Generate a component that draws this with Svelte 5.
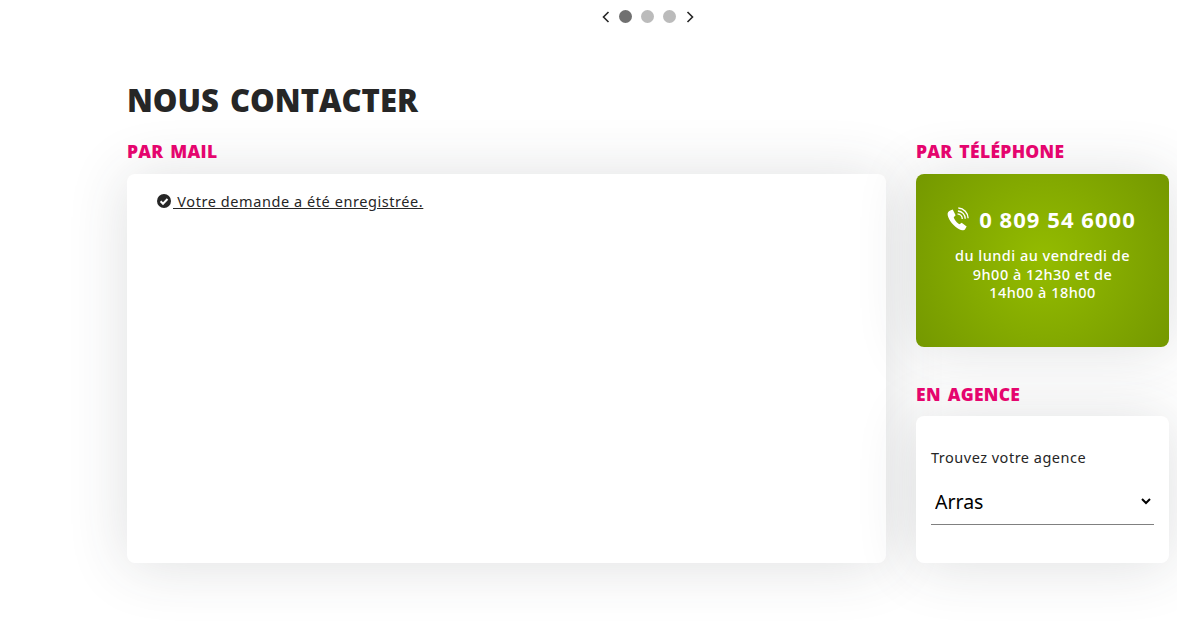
<script>
  const dots = [true, false, false];
</script>

<div class="page">
  <nav class="pager">
    <svg class="arrow" viewBox="0 0 8 12" width="8" height="12"><path d="M6.5 1 L1.5 6 L6.5 11" /></svg>
    {#each dots as on}
      <span class="dot" class:on></span>
    {/each}
    <svg class="arrow next" viewBox="0 0 8 12" width="8" height="12"><path d="M1.5 1 L6.5 6 L1.5 11" /></svg>
  </nav>

  <h1>NOUS CONTACTER</h1>

  <div class="columns">
    <section class="left">
      <h2>PAR MAIL</h2>
      <div class="card mail">
        <a href="#top" class="notice">
          <svg viewBox="0 0 14 14" width="14" height="14">
            <circle cx="7" cy="7" r="7" fill="#262626" />
            <path d="M3.6 7.3 L6 9.7 L10.5 5" fill="none" stroke="#fff" stroke-width="2" />
          </svg>
          <span>&#160;Votre demande a été enregistrée.</span>
        </a>
      </div>
    </section>

    <aside class="right">
      <h2>PAR TÉLÉPHONE</h2>
      <div class="card phone">
        <div class="number">
          <svg viewBox="0 0 24 24" width="25" height="25" fill="none">
            <path fill="#fff" d="M5 3.4 L7.4 2.4 L10.2 8 L8.4 9.8 C9 12 11.6 15.4 14 16.6 L16 15 L20.8 18.6 L19.4 21 C18.4 22.8 16 22.8 13.6 21.4 C8.4 18.4 3.4 12.4 2.6 7.8 C2.2 5.6 3.2 4.2 5 3.4 Z" />
            <path stroke="#fff" stroke-width="1.3" d="M12 6.6 C14.6 6.8 16.6 9 16.6 11.6 M12.4 3.8 C16.4 4 19.4 7.4 19.4 11.2 M12.8 1 C18 1.2 22.2 5.6 22.2 10.8" />
          </svg>
          <span>0 809 54 6000</span>
        </div>
        <p>du lundi au vendredi de<br />9h00 à 12h30 et de<br />14h00 à 18h00</p>
      </div>

      <h2 class="agency">EN AGENCE</h2>
      <div class="card agence">
        <label for="agence">Trouvez votre agence</label>
        <select id="agence">
          <option>Arras</option>
        </select>
      </div>
    </aside>
  </div>
</div>

<style>
  :global(body) {
    margin: 0;
    background: #fff;
    overflow: hidden;
  }
  .page {
    height: 635px;
    box-sizing: border-box;
    padding: 0 8px 0 127px;
    font-family: "Noto Sans", "Open Sans", sans-serif;
    color: #262626;
  }
  .pager {
    display: flex;
    align-items: center;
    justify-content: center;
    gap: 9px;
    height: 33px;
    width: 1041px;
  }
  .arrow.next {
    margin-left: 1px;
  }
  .arrow path {
    fill: none;
    stroke: #262626;
    stroke-width: 1.6;
  }
  .dot {
    width: 13px;
    height: 13px;
    border-radius: 50%;
    background: #bbb;
  }
  .dot.on {
    background: #707070;
  }
  h1 {
    margin: 47px 0 0;
    height: 40px;
    font-family: "Open Sans", "Noto Sans", sans-serif;
    font-size: 31px;
    line-height: 40px;
    font-weight: 800;
    letter-spacing: 0;
    word-spacing: 3px;
  }
  h2 {
    margin: 0;
    height: 23px;
    font-family: "Open Sans", "Noto Sans", sans-serif;
    font-size: 17.5px;
    line-height: 23px;
    font-weight: 800;
    color: #e5056e;
    letter-spacing: 0.3px;
    word-spacing: 2px;
  }
  .columns {
    display: flex;
    gap: 30px;
    margin-top: 20px;
  }
  .left {
    width: 759px;
  }
  .right {
    width: 253px;
  }
  .card {
    margin-top: 11px;
    border-radius: 8px;
    background: #fff;
    box-shadow: 0 2px 60px rgba(50, 55, 62, 0.16);
    box-sizing: border-box;
  }
  .mail {
    height: 389px;
    padding: 17px 30px;
  }
  .notice {
    display: inline-flex;
    align-items: center;
    color: #262626;
    font-size: 14.5px;
    line-height: 20px;
    text-decoration: underline;
  }
  .notice svg {
    margin-right: 2px;
  }
  .notice span {
    white-space: pre;
    letter-spacing: 0.57px;
  }
  .phone {
    height: 173px;
    padding: 32px 4px 0 0;
    text-align: center;
    color: #fff;
    background: radial-gradient(circle at 50% 50%, #94bc00 0%, #749800 100%);
  }
  .number {
    display: flex;
    align-items: center;
    justify-content: center;
    gap: 9px;
    font-size: 22px;
    line-height: 26px;
    font-weight: 700;
    letter-spacing: 1.05px;
  }
  .phone p {
    margin: 14px 0 0;
    padding-left: 4px;
    font-size: 14.5px;
    line-height: 18.5px;
    font-weight: 500;
    letter-spacing: 0.48px;
  }
  .agency {
    margin-top: 36px;
  }
  .agency + .card {
    margin-top: 10px;
  }
  .agence {
    height: 147px;
    padding: 31px 15px 0;
  }
  label {
    display: block;
    font-size: 14.5px;
    line-height: 20px;
    letter-spacing: 0.5px;
  }
  select {
    display: block;
    width: 100%;
    height: 47px;
    margin-top: 11px;
    padding: 0;
    border: 0;
    border-bottom: 1px solid #808080;
    background: #fff;
    color: #000;
    font-family: inherit;
    font-size: 19.5px;
    outline: none;
  }
</style>
